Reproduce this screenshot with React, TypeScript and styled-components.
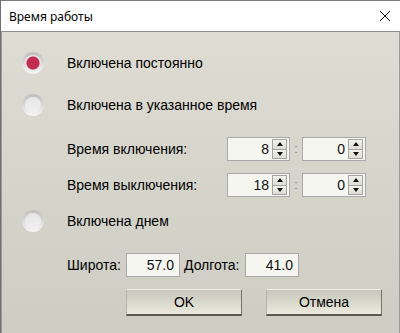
import styled, { createGlobalStyle } from "styled-components";

const Global = createGlobalStyle`
  html, body { margin: 0; padding: 0; background: #ffffff; }
  body { font-family: "Liberation Sans", Arial, sans-serif; }
`;

const Window = styled.div`
  width: 400px;
  height: 333px;
  box-sizing: border-box;
  border-top: 1px solid #7c7c7c;
  border-left: 1px solid #6f6f6f;
  display: flex;
  flex-direction: column;
  background: #ffffff;
`;

const TitleBar = styled.div`
  height: 30px;
  display: flex;
  align-items: center;
  justify-content: space-between;
  padding: 0 8px 0 8px;
  font-family: "Noto Sans", "Liberation Sans", sans-serif;
  font-size: 12px;
  color: #000;
`;

const Close = styled.svg`
  width: 12px;
  height: 12px;
  margin-right: 1px;
`;

const Content = styled.div`
  flex: 1;
  border-top: 1px solid #8d8d8d;
  border-left: 1px solid #9b9b9b;
  border-right: 1px solid #9b9b9b;
  background: linear-gradient(#dedcd3, #cdcdc4);
  padding: 20px 0 0 20px;
  display: flex;
  flex-direction: column;
  color: #000;
  font-size: 14px;
`;

const Row = styled.div<{ $mt?: number; $indent?: number }>`
  display: flex;
  align-items: center;
  margin-top: ${(p) => p.$mt ?? 0}px;
  padding-left: ${(p) => p.$indent ?? 0}px;
`;

const Radio = styled.div<{ $checked?: boolean }>`
  width: 22px;
  height: 22px;
  border-radius: 50%;
  box-sizing: border-box;
  background: linear-gradient(#bdbdbd, #f7f7f7);
  display: flex;
  align-items: center;
  justify-content: center;
  margin-right: 23px;

  &::after {
    content: "";
    width: 16px;
    height: 16px;
    border-radius: 50%;
    background: ${(p) =>
      p.$checked
        ? "radial-gradient(circle, #c52b50 0 6px, #e4e4e4 7px)"
        : "linear-gradient(#e6e6e6, #f0f0f0)"};
  }
`;

const Label = styled.span<{ $w?: number; $pl?: number }>`
  display: inline-block;
  box-sizing: border-box;
  width: ${(p) => (p.$w ? `${p.$w}px` : "auto")};
  padding-left: ${(p) => p.$pl ?? 0}px;
  flex-shrink: 0;
`;

const Field = styled.div<{ $w: number }>`
  width: ${(p) => p.$w}px;
  height: 24px;
  box-sizing: border-box;
  border: 1px solid #a9a9a9;
  background: #f6f6f0;
  display: flex;
  align-items: center;
  justify-content: flex-end;
  padding: 0 2px 0 2px;
  font-size: 14px;
  color: #101010;
`;

const Value = styled.span`
  padding-right: 3px;
`;

const Spin = styled.div`
  width: 15px;
  height: 20px;
  display: flex;
  flex-direction: column;
  border: 1px solid #a4a4a4;
  box-sizing: border-box;
`;

const SpinBtn = styled.div<{ $up?: boolean }>`
  flex: 1;
  background: linear-gradient(#f2f2ec, #dcdcd4);
  display: flex;
  align-items: center;
  justify-content: center;
  & + & {
    border-top: 1px solid #a4a4a4;
  }
  &::after {
    content: "";
    width: 0;
    height: 0;
    border-left: 3.5px solid transparent;
    border-right: 3.5px solid transparent;
    ${(p) =>
      p.$up
        ? "border-bottom: 4px solid #111;"
        : "border-top: 4px solid #111;"}
  }
`;

const Colon = styled.span`
  width: 12px;
  text-align: center;
  font-size: 12px;
  color: #5c7ea6;
`;

const Button = styled.button<{ $ml?: number }>`
  width: 116px;
  height: 27px;
  margin-left: ${(p) => p.$ml ?? 0}px;
  box-sizing: border-box;
  border-top: 1px solid #f1f0e7;
  border-left: 1px solid #b4b4aa;
  border-right: 1px solid #74746b;
  border-bottom: 2px solid #5a5a52;
  background: linear-gradient(#c6c6bc, #eceadd);
  font-family: "Liberation Sans", Arial, sans-serif;
  font-size: 14px;
  color: #000;
  padding: 0;
`;

function SpinField({ value, w }: { value: string; w: number }) {
  return (
    <Field $w={w}>
      <Value>{value}</Value>
      <Spin>
        <SpinBtn $up />
        <SpinBtn />
      </Spin>
    </Field>
  );
}

export default function App() {
  return (
    <>
      <Global />
      <Window>
        <TitleBar>
          <span>Время работы</span>
          <Close viewBox="0 0 12 12">
            <path d="M1 1 L11 11 M11 1 L1 11" stroke="#111" strokeWidth="1" fill="none" />
          </Close>
        </TitleBar>
        <Content>
          <Row>
            <Radio $checked />
            <Label>Включена постоянно</Label>
          </Row>
          <Row $mt={20}>
            <Radio />
            <Label>Включена в указанное время</Label>
          </Row>
          <Row $mt={21} $indent={45}>
            <Label $w={160}>Время включения:</Label>
            <SpinField value="8" w={63} />
            <Colon>:</Colon>
            <SpinField value="0" w={64} />
          </Row>
          <Row $mt={12} $indent={45}>
            <Label $w={160}>Время выключения:</Label>
            <SpinField value="18" w={63} />
            <Colon>:</Colon>
            <SpinField value="0" w={64} />
          </Row>
          <Row $mt={13}>
            <Radio />
            <Label>Включена днем</Label>
          </Row>
          <Row $mt={21} $indent={45}>
            <Label $w={59}>Широта:</Label>
            <Field $w={54}>
              <Value>57.0</Value>
            </Field>
            <Label $w={65} $pl={4}>
              Долгота:
            </Label>
            <Field $w={54}>
              <Value>41.0</Value>
            </Field>
          </Row>
          <Row $mt={12} $indent={104}>
            <Button>OK</Button>
            <Button $ml={24}>Отмена</Button>
          </Row>
        </Content>
      </Window>
    </>
  );
}
